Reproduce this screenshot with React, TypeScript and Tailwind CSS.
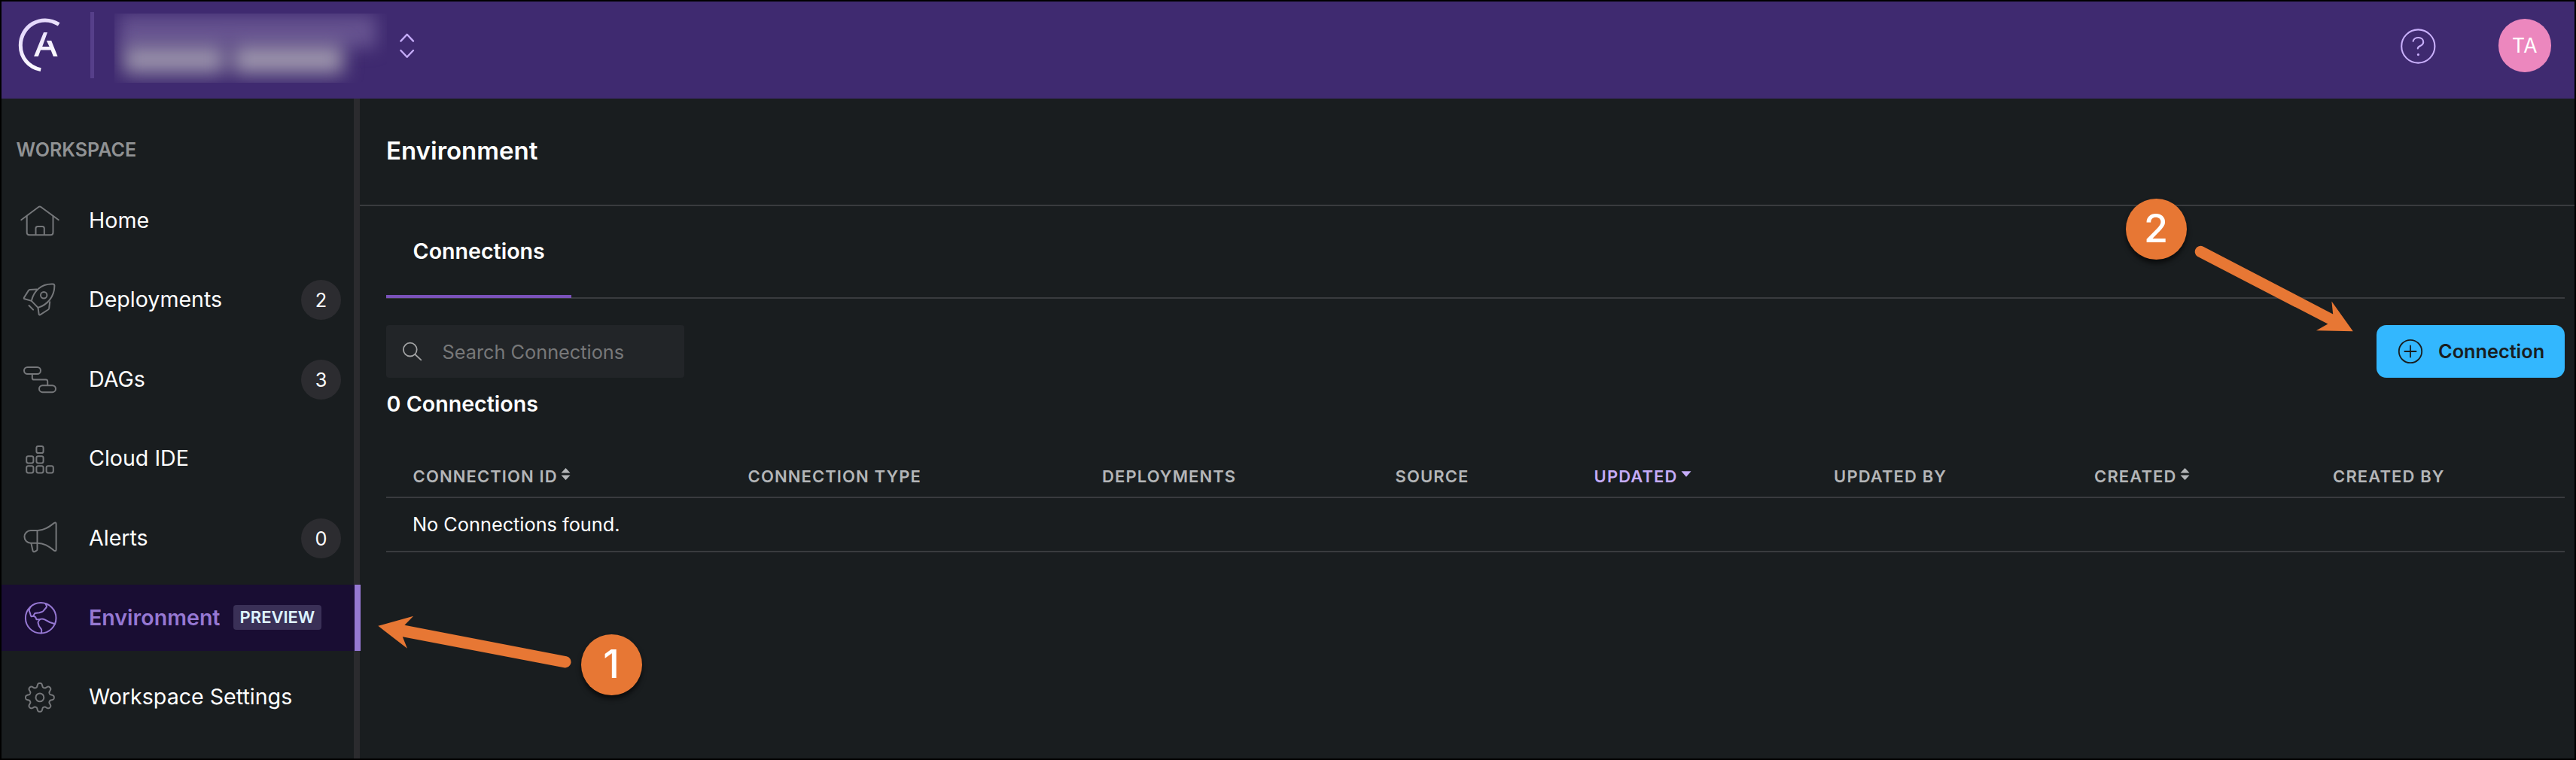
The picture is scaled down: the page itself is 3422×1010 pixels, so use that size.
import type { ReactNode } from 'react';

function NavSvg({ children }: { children: ReactNode }) {
  return (
    <svg className="h-[60px] w-[60px] shrink-0" viewBox="0 0 60 60" fill="none" stroke="currentColor" strokeWidth="2" strokeLinecap="round" strokeLinejoin="round">
      {children}
    </svg>
  );
}

const HomeIcon = () => (
  <NavSvg>
    <path d="M5.2 29.2 28 12.2Q29.8 11 31.6 12.2L54.8 29.2" />
    <path d="M12.7 24V45.8Q12.7 49.3 16.2 49.3H44Q47.5 49.3 47.5 45.8V24" />
    <path d="M24.5 49V40.5Q24.5 38 27 38H33.3Q35.8 38 35.8 40.5V49" />
  </NavSvg>
);

const RocketIcon = () => (
  <NavSvg>
    <path d="M18.8 30.9 27.5 39.9C39 36.5 49.5 26 49.4 10.6Q49.2 8.7 47.4 8.6C31.5 7.8 21.8 17.5 18.8 30.9Z" />
    <circle cx="35.2" cy="23.3" r="4.2" />
    <path d="M25.6 15.5 16.6 15.9Q15.6 16 15 16.9L8.9 26.6Q8.4 28 9.8 28.3L18.8 30.9" />
    <path d="M43.2 32.2 42.2 40.7Q42 41.9 41 42.5L30.3 49.4Q28.9 49.9 28.7 48.6L27.5 39.9" />
    <path d="M15.5 37 21.1 42.6" />
  </NavSvg>
);

const DagIcon = () => (
  <NavSvg>
    <rect x="9" y="14" width="22" height="9" rx="4.5" />
    <rect x="29" y="38.2" width="22" height="9" rx="4.5" />
    <path d="M19.8 23V28.2Q19.8 30.6 22.2 30.6H37.8Q40.2 30.6 40.2 33V38" />
  </NavSvg>
);

const CloudIdeIcon = () => (
  <NavSvg>
    {[
      [30, 17.5],
      [16.8, 30.8],
      [30, 30.8],
      [16.8, 43.8],
      [30, 43.8],
      [43.2, 43.8],
    ].map(([x, y]) => (
      <rect key={`${x}-${y}`} x={x - 4.6} y={y - 4.6} width="9.2" height="9.2" rx="2.4" />
    ))}
  </NavSvg>
);

const MegaphoneIcon = () => (
  <NavSvg>
    <path d="M26.5 20H17.8A8.35 8.35 0 0 0 17.8 36.7H26.5" />
    <path d="M26.5 20V36.7C35 36.5 41.5 41 48.8 46.6Q51.6 48 51.6 45.3V11.4Q51.6 8.7 48.8 10.1C41.5 15.7 35 20.2 26.5 20Z" />
    <path d="M18.4 36.9 20.4 46.3Q21 48.9 23.2 48L25.4 46.9Q26.5 46.4 26.5 45V36.9" />
  </NavSvg>
);

const GlobeIcon = () => (
  <NavSvg>
    <circle cx="31.2" cy="30.3" r="20.3" />
    <path d="M37.4 11.2 38.9 14.2Q39.2 15.4 38.3 16.5L34.6 20.8Q33.7 21.8 32.4 22.2L29.2 23.2L23.3 24 21.2 27.7 18.8 28.3Q17.6 27.6 17.2 24.6L15.6 20.2Q15.8 18.4 18 15" />
    <path d="M21.2 27.7 24.2 29.2 25.4 32.2 30.4 31.9Q33.4 30.8 36.4 32.4L43.2 36 50.2 38.2" />
    <path d="M30.4 31.9Q26.8 35.4 27.7 37.2L28.8 41 32 45.4Q32.8 47 31.8 50.4" />
  </NavSvg>
);

const gearOutline = (() => {
  const points: string[] = [];
  for (let i = 0; i < 240; i++) {
    const angle = (i / 240) * Math.PI * 2;
    const radius = 16.4 + 2.5 * (Math.tanh(1.6 * Math.cos(8 * angle)) / Math.tanh(1.6));
    points.push(`${(29.9 + radius * Math.cos(angle)).toFixed(2)} ${(29.9 + radius * Math.sin(angle)).toFixed(2)}`);
  }
  return `M${points.join('L')}Z`;
})();

const GearIcon = () => (
  <NavSvg>
    <path d={gearOutline} />
    <circle cx="29.9" cy="29.9" r="5.4" />
  </NavSvg>
);

type NavItem = { label: string; icon: ReactNode; count?: number; tag?: string; active?: boolean };

const navItems: NavItem[] = [
  { label: 'Home', icon: <HomeIcon /> },
  { label: 'Deployments', icon: <RocketIcon />, count: 2 },
  { label: 'DAGs', icon: <DagIcon />, count: 3 },
  { label: 'Cloud IDE', icon: <CloudIdeIcon /> },
  { label: 'Alerts', icon: <MegaphoneIcon />, count: 0 },
  { label: 'Environment', icon: <GlobeIcon />, tag: 'PREVIEW', active: true },
  { label: 'Workspace Settings', icon: <GearIcon /> },
];

function NavRow({ item }: { item: NavItem }) {
  return (
    <li
      className={
        item.active
          ? '-mr-[9px] flex h-[88px] items-center border-r-8 border-[#9678d3] bg-[#190d33] pl-[20.5px] font-semibold text-[#9678d3]'
          : 'flex h-[88px] items-center pr-[17px] pl-[20.5px] text-white'
      }
    >
      <span className={item.active ? 'flex' : 'flex text-[#75777a]'}>{item.icon}</span>
      <span className="ml-[35.5px] whitespace-nowrap">{item.label}</span>
      {item.tag && (
        <span className="mb-px ml-[17.5px] flex h-[33px] w-[117px] items-center justify-center rounded bg-[#3a3057] pb-px text-[22px] font-semibold text-[#def3ff]">
          {item.tag}
        </span>
      )}
      {item.count !== undefined && (
        <span className="ml-auto flex size-[53px] items-center justify-center rounded-full bg-[#2c2c30] text-[25.3px] text-white">
          {item.count}
        </span>
      )}
    </li>
  );
}

function Header() {
  return (
    <header className="flex h-[129px] shrink-0 items-start bg-[#3f2a70]">
      <svg className="mt-[20px] ml-[20px] h-[76px] w-[60px] shrink-0" viewBox="22 22 60 76" fill="none">
        <defs>
          <linearGradient id="logo" x1="30" y1="25" x2="70" y2="95" gradientUnits="userSpaceOnUse">
            <stop offset="0" stopColor="#ddcffa" />
            <stop offset="0.75" stopColor="#fbf9ff" />
          </linearGradient>
        </defs>
        <path d="M78.2 32.4C54 17.5 27.3 35 27.3 60.2C27.3 76.5 38 89.5 54.2 92.6" stroke="url(#logo)" strokeWidth="5" />
        <path d="M58 43H63L56.2 62H65.6L61.8 54H68.2L76.6 75H70.9L67.5 66.5H54L50.8 75H45.1Z" fill="url(#logo)" />
      </svg>
      <div className="mt-[14px] ml-[38px] h-[88px] w-[5px] bg-[#563f8a]" />
      <div className="mt-[16px] ml-[27px] flex h-[92px] w-[362px] flex-col overflow-hidden">
        <div className="mt-[2px] ml-[6px] h-[44px] w-[342px] shrink-0 bg-[#65528f] blur-[11px]" />
        <div className="-mt-[4px] ml-[12px] flex h-[38px] shrink-0 gap-[12px] blur-[12px]">
          <div className="w-[134px] bg-[#9890aa]" />
          <div className="w-[146px] bg-[#9c94ac]" />
        </div>
      </div>
      <svg className="mt-[40px] ml-[15px] h-[38px] w-[24px]" viewBox="0 0 24 38" fill="none" stroke="#c5acf8" strokeWidth="2.4" strokeLinecap="round" strokeLinejoin="round">
        <path d="M3.4 12.6 11.7 3.8 20 12.6M3.4 25 11.7 33.8 20 25" />
      </svg>
      <svg className="mt-[35px] ml-auto h-[50px] w-[50px]" viewBox="0 0 50 50" fill="none" stroke="#c9b0fb" strokeWidth="2.1" strokeLinecap="round">
        <circle cx="25.3" cy="24.5" r="22.1" />
        <path d="M18.6 17.8C20 11.4 32.2 11.2 32.2 19C32.2 24.5 24.8 23.4 24.8 27.4" />
        <circle cx="25.4" cy="35.6" r="0.9" fill="#c9b0fb" strokeWidth="1.4" />
      </svg>
      <div className="mt-[23px] mr-[31px] ml-[82px] flex h-[71px] w-[70px] items-center justify-center rounded-full bg-[#ec87be] text-[26.4px] tracking-[0.5px] text-white">
        TA
      </div>
    </header>
  );
}

function SortIcon({ kind }: { kind: 'both' | 'desc' }) {
  if (kind === 'desc') {
    return (
      <svg className="mb-[6px] ml-[4px] h-[8px] w-[14px]" viewBox="0 0 14 8" fill="currentColor">
        <path d="M0.5 0.3H13.5L7 7.7Z" />
      </svg>
    );
  }
  return (
    <svg className="mb-[6px] ml-[4px] h-[16px] w-[13px]" viewBox="0 0 13 16" fill="currentColor">
      <path d="M0.5 6.5H12.5L6.5 0ZM0.5 9.5H12.5L6.5 16Z" />
    </svg>
  );
}

const columns: { label: string; sort?: 'both' | 'desc' }[] = [
  { label: 'CONNECTION ID', sort: 'both' },
  { label: 'CONNECTION TYPE' },
  { label: 'DEPLOYMENTS' },
  { label: 'SOURCE' },
  { label: 'UPDATED', sort: 'desc' },
  { label: 'UPDATED BY' },
  { label: 'CREATED', sort: 'both' },
  { label: 'CREATED BY' },
];

function ConnectionsTable() {
  return (
    <div className="mt-[52px]">
      <div className="grid h-[58px] grid-cols-[445px_470.5px_389.5px_264px_318.5px_346px_317px_343.5px] border-b-2 border-[#393b3e] text-[22px] font-semibold tracking-[1.1px] text-[#b4b6b8]">
        {columns.map((column) => (
          <div
            key={column.label}
            className={column.sort === 'desc' ? 'flex h-[58px] items-center pl-[35.6px] text-[#c5acf8]' : 'flex h-[58px] items-center pl-[35.6px]'}
          >
            {column.label}
            {column.sort && <SortIcon kind={column.sort} />}
          </div>
        ))}
      </div>
      <div className="flex h-[72px] items-center border-b-2 border-[#393b3e] pl-[35px] text-[25.3px]">No Connections found.</div>
    </div>
  );
}

function Callout({ value, className }: { value: string; className: string }) {
  return (
    <div className={`absolute flex size-[81px] items-center justify-center rounded-full bg-[#e77734] text-[52px] font-medium text-white shadow-[0_5px_6px_rgba(0,0,0,0.6)] ${className}`}>
      {value}
    </div>
  );
}

export default function App() {
  return (
    <div className="relative flex h-[1010px] w-[3422px] flex-col overflow-hidden border-2 border-black bg-[#191d1f] font-[Inter,sans-serif] text-[28.6px] leading-none text-white">
      <Header />
      <div className="flex min-h-0 flex-1">
        <aside className="w-[476px] shrink-0 border-r-8 border-[#2b2b2e]">
          <h2 className="mt-[55px] ml-[19.5px] text-[25.1px] leading-[26px] font-semibold text-[#909294]">WORKSPACE</h2>
          <ul className="mt-[37px] flex flex-col gap-[17.6px]">
            {navItems.map((item) => (
              <NavRow key={item.label} item={item} />
            ))}
          </ul>
        </aside>
        <main className="min-w-0 flex-1">
          <div className="flex h-[143px] items-center border-b-2 border-[#393b3e] pb-[3px] pl-[35px]">
            <h1 className="text-[33px] font-semibold">Environment</h1>
          </div>
          <div className="mr-[13px] ml-[35px]">
            <div className="flex h-[123px] items-start border-b-2 border-[#393b3e]">
              <div className="flex h-[122px] w-[246px] items-center border-b-4 border-[#7a52b9] pt-[2px] pl-[35.6px] font-semibold">Connections</div>
            </div>
            <div className="mt-[35px] flex justify-between">
              <div className="flex h-[70px] w-[396px] items-center rounded bg-[#222528] pt-px text-[25.3px] text-[#777879]">
                <svg className="ml-[20px] h-[30px] w-[30px]" viewBox="0 0 30 30" fill="none" stroke="#a2a3a4" strokeWidth="1.8" strokeLinecap="round">
                  <circle cx="11.8" cy="11.6" r="8.9" />
                  <path d="M18.4 18 26.3 25.4" />
                </svg>
                <span className="ml-[24.5px]">Search Connections</span>
              </div>
              <button className="flex h-[70px] w-[250px] items-center rounded-[13px] bg-[#33b7fe] text-[25.3px] font-semibold text-[#191d1f]">
                <svg className="ml-[28px] h-[34px] w-[34px]" viewBox="0 0 34 34" fill="none" stroke="currentColor" strokeWidth="1.8" strokeLinecap="round">
                  <circle cx="17" cy="17" r="15.2" />
                  <path d="M17 9.4V24.6M9.4 17H24.6" />
                </svg>
                <span className="ml-[20px]">Connection</span>
              </button>
            </div>
            <h3 className="mt-[20px] ml-[0.6px] leading-[30px] font-semibold">0 Connections</h3>
            <ConnectionsTable />
          </div>
        </main>
      </div>

      <svg className="absolute top-[806px] left-[490px] h-[90px] w-[280px]" viewBox="492 808 280 90" fill="#e77734">
        <path d="M502.3 831.8 549.2 818.7 537.4 830.8 752.6 872.2A7.7 7.7 0 0 1 750.6 887.4L534.8 846.2 541 861.8Z" />
      </svg>
      <Callout value="1" className="top-[840.5px] left-[769.5px]" />
      <svg className="absolute top-[310px] left-[2900px] h-[140px] w-[240px]" viewBox="2902 312 240 140" fill="#e77734">
        <path d="M3125.8 440.2 3097.4 400.4 3099.2 417.4 2926.4 327.4A7.7 7.7 0 0 0 2919 340.8L3092.4 430.6 3077 439.2Z" />
      </svg>
      <Callout value="2" className="top-[261.5px] left-[2821.5px]" />
    </div>
  );
}
